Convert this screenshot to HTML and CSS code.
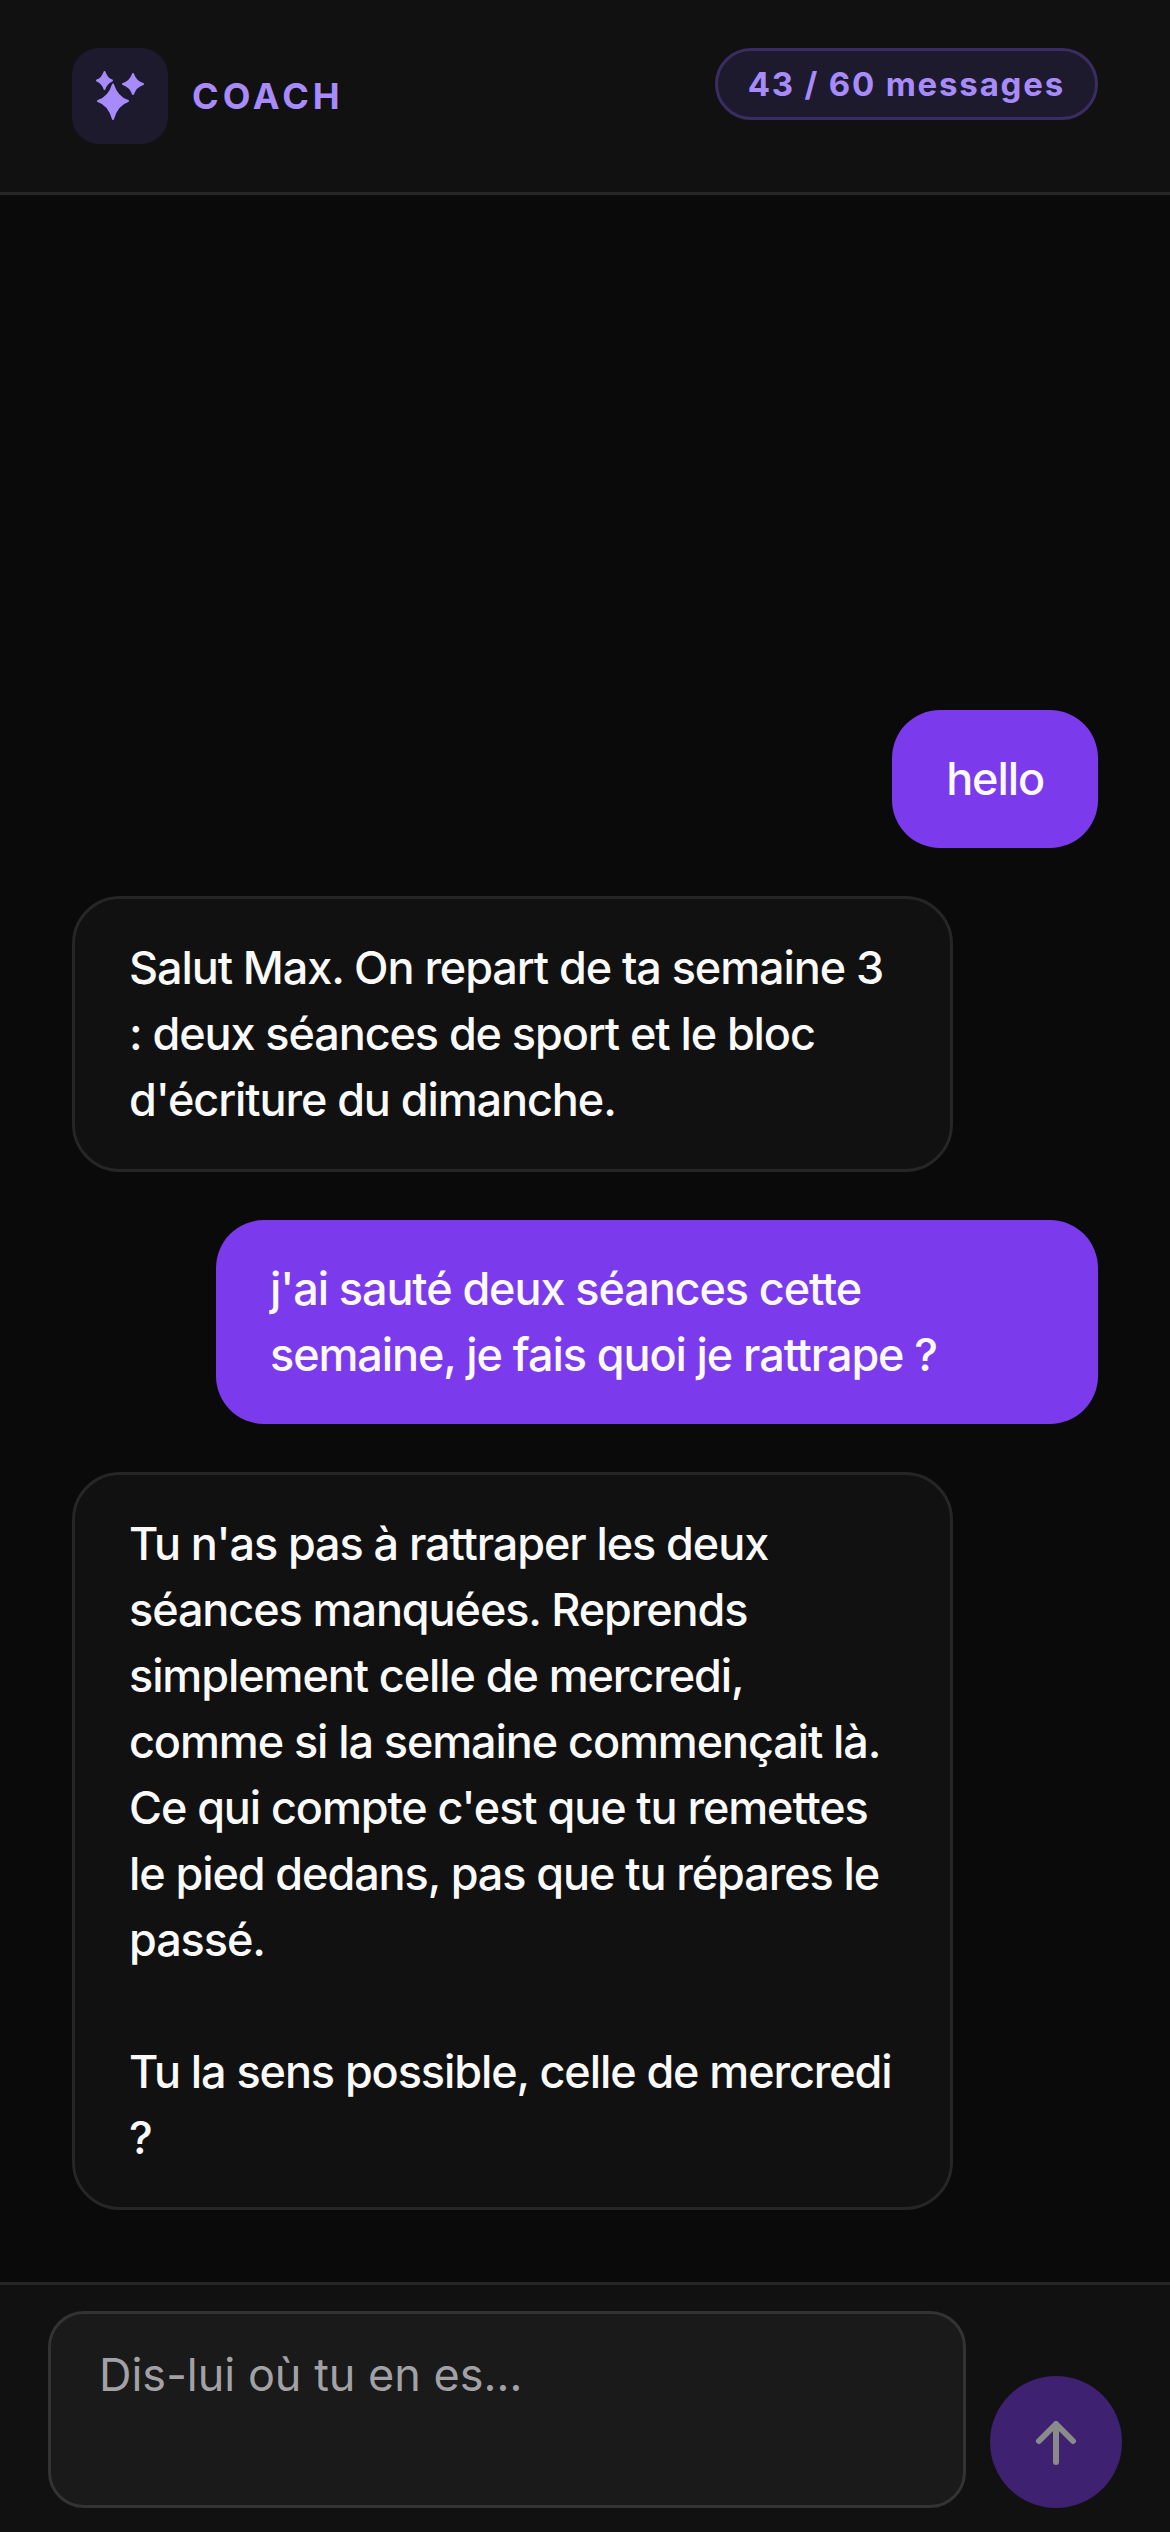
FILE: index.html
```html
<!DOCTYPE html>
<html lang="fr">
<head>
<meta charset="utf-8">
<title>Coach</title>
<link rel="stylesheet" href="styles.css">
</head>
<body>
<div class="app">
  <header class="topbar">
    <div class="brand">
      <div class="brand-icon">
        <svg class="sparkles" viewBox="0 0 96 96" width="96" height="96" aria-hidden="true">
          <path d="M41 36.500 Q45 49.500 56 53 Q45 56.500 41 71 Q37 56.500 26 53 Q37 49.500 41 36.500Z"/>
          <path d="M32.500 24 Q34.500 30.500 40 32.500 Q34.500 34.500 32.500 41 Q30.500 34.500 25 32.500 Q30.500 30.500 32.500 24Z"/>
          <path d="M61 26 Q63.500 33.500 71 36 Q63.500 38.500 61 46 Q58.500 38.500 51 36 Q58.500 33.500 61 26Z"/>
        </svg>
      </div>
      <span class="brand-name">COACH</span>
    </div>
    <div class="quota">43 / 60 messages</div>
  </header>
  <main class="thread">
    <div class="bubble user">hello</div>
    <div class="bubble coach">Salut Max. On repart de ta semaine 3 : deux séances de sport et le bloc d'écriture du dimanche.</div>
    <div class="bubble user">j'ai sauté deux séances cette semaine, je fais quoi je rattrape ?</div>
    <div class="bubble coach">Tu n'as pas à rattraper les deux séances manquées. Reprends simplement celle de mercredi, comme si la semaine commençait là. Ce qui compte c'est que tu remettes le pied dedans, pas que tu répares le passé.

Tu la sens possible, celle de mercredi ?</div>
  </main>
  <footer class="composer">
    <div class="field">Dis-lui où tu en es…</div>
    <button class="send" type="button" aria-label="Envoyer">
      <svg viewBox="0 0 48 48" width="48" height="48" aria-hidden="true">
        <path d="M24 44V6M7 23 24 6l17 17"/>
      </svg>
    </button>
  </footer>
</div>
</body>
</html>
```
FILE: styles.css
```css
* { box-sizing: border-box; }
html, body { margin: 0; height: 100%; }
body {
  background: #0a0a0a;
  color: #fafafa;
  font-family: Inter, "Liberation Sans", sans-serif;
  font-size: 45px;
  line-height: 66px;
}
.app { height: 2532px; display: flex; flex-direction: column; }
.topbar {
  height: 195px;
  flex: none;
  display: flex;
  justify-content: space-between;
  align-items: flex-start;
  padding: 48px 72px 0;
  background: #111111;
  border-bottom: 3px solid #262626;
}
.brand { display: flex; align-items: center; gap: 24px; }
.brand-icon {
  width: 96px;
  height: 96px;
  border-radius: 27px;
  background: #1e1a2e;
}
.sparkles { display: block; fill: #a78bfa; stroke: #a78bfa; stroke-width: 2; stroke-linejoin: round; }
.brand-name {
  font-size: 36px;
  font-weight: 700;
  line-height: 44px;
  letter-spacing: 4px;
  color: #a78bfa;
}
.quota {
  height: 72px;
  padding: 0 30px;
  display: flex;
  align-items: center;
  border: 3px solid #3a2d63;
  border-radius: 36px;
  background: #1e1a2e;
  color: #a78bfa;
  font-size: 33px;
  font-weight: 700;
  letter-spacing: 1.800px;
}
.thread {
  flex: 1;
  display: flex;
  flex-direction: column;
  justify-content: flex-end;
  gap: 48px;
  padding: 0 72px 72px;
}
.bubble {
  padding: 36px 54px;
  white-space: pre-line;
  font-weight: 450;
  letter-spacing: -1.100px;
}
.user {
  align-self: flex-end;
  max-width: 882px;
  background: #7c3aed;
  border-radius: 48px;
}
.coach {
  align-self: flex-start;
  width: 881px;
  padding-right: 50px;
  background: #111111;
  border: 3px solid #262626;
  border-radius: 48px;
}
.composer {
  height: 250px;
  flex: none;
  display: flex;
  align-items: flex-end;
  gap: 24px;
  padding: 24px 48px;
  background: #111111;
  border-top: 3px solid #262626;
}
.field {
  flex: 1;
  height: 197px;
  padding: 28px 48px;
  background: #1a1a1a;
  border: 3px solid #333333;
  border-radius: 36px;
  color: #a1a1a6;
}
.send {
  width: 132px;
  height: 132px;
  flex: none;
  padding: 0;
  display: flex;
  align-items: center;
  justify-content: center;
  border: 0;
  border-radius: 50%;
  background: #3e2170;
}
.send svg { fill: none; stroke: #8a8a8a; stroke-width: 6; stroke-linecap: round; stroke-linejoin: round; }
```
